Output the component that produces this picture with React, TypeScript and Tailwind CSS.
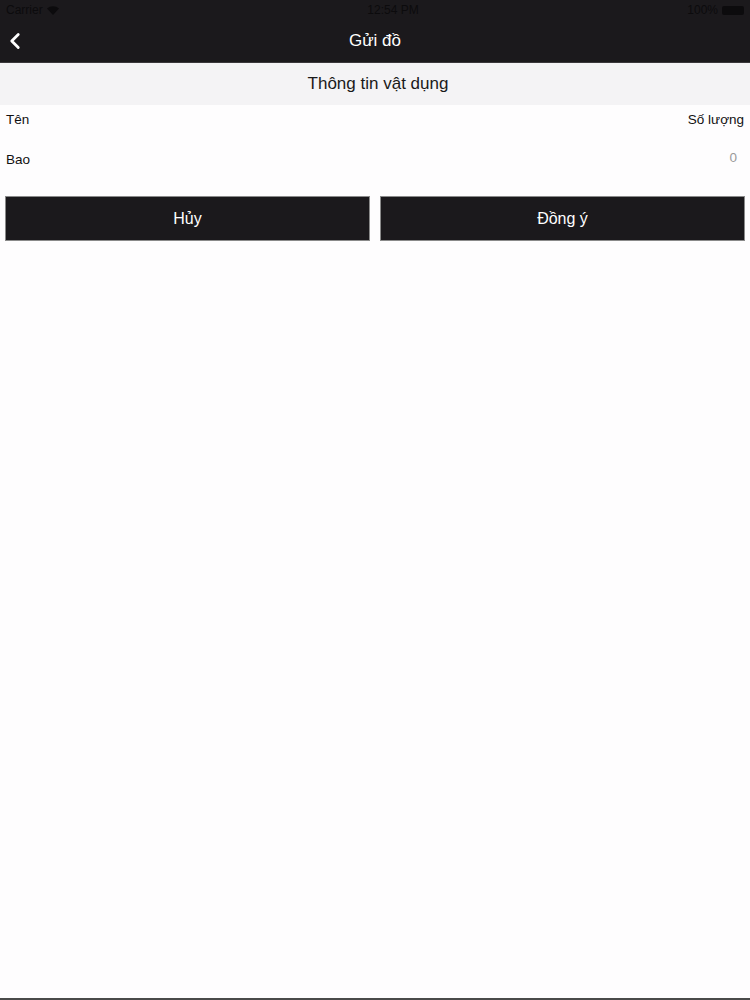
import { ChevronLeft } from "lucide-react";

export default function App() {
  return (
    <div className="h-[1000px] flex flex-col bg-[#fefdfe] font-['Helvetica','Liberation_Sans',sans-serif] border-b-2 border-[#4a4a4a]">
      <div className="bg-[#1b191c] border-b border-[#3a383b]">
        <div className="h-5 px-[6px] flex items-center justify-between text-[12px] text-[#0c0b0d]">
          <div className="flex items-center gap-1">
            <span>Carrier</span>
            <svg width="12" height="9" viewBox="0 0 12 9" fill="#0c0b0d">
              <path d="M6 9L0 2.5a9 9 0 0 1 12 0z" />
            </svg>
          </div>
          <span className="pl-10">12:54 PM</span>
          <div className="flex items-center gap-1">
            <span>100%</span>
            <div className="w-[22px] h-[9px] bg-[#0c0b0d] rounded-[2px]" />
          </div>
        </div>
        <div className="h-[42px] relative flex items-center justify-center">
          <ChevronLeft className="absolute left-[2px] w-[26px] h-[26px] text-white" strokeWidth={2.6} />
          <span className="text-white text-[17px]">Gửi đồ</span>
        </div>
      </div>

      <div className="h-[42px] bg-[#f4f3f5] flex items-center justify-center text-[17px] text-[#1a1a1a] pl-[6px]">
        Thông tin vật dụng
      </div>

      <div className="px-[6px] pt-[5px] flex justify-between text-[13.5px] text-[#111]">
        <span>Tên</span>
        <span>Số lượng</span>
      </div>
      <div className="px-[6px] mt-[20px] flex justify-between items-center text-[13.5px] text-[#111]">
        <span>Bao</span>
        <span className="text-[#9a9a9a] pr-[7px] -mt-[5px]">0</span>
      </div>

      <div className="px-[5px] mt-[25px] grid grid-cols-2 gap-[10px]">
        <button className="h-[45px] pt-[2px] bg-[#1b191c] border border-[#8a8a8a] text-white text-[16px]">Hủy</button>
        <button className="h-[45px] pt-[2px] bg-[#1b191c] border border-[#8a8a8a] text-white text-[16px]">Đồng ý</button>
      </div>
    </div>
  );
}
